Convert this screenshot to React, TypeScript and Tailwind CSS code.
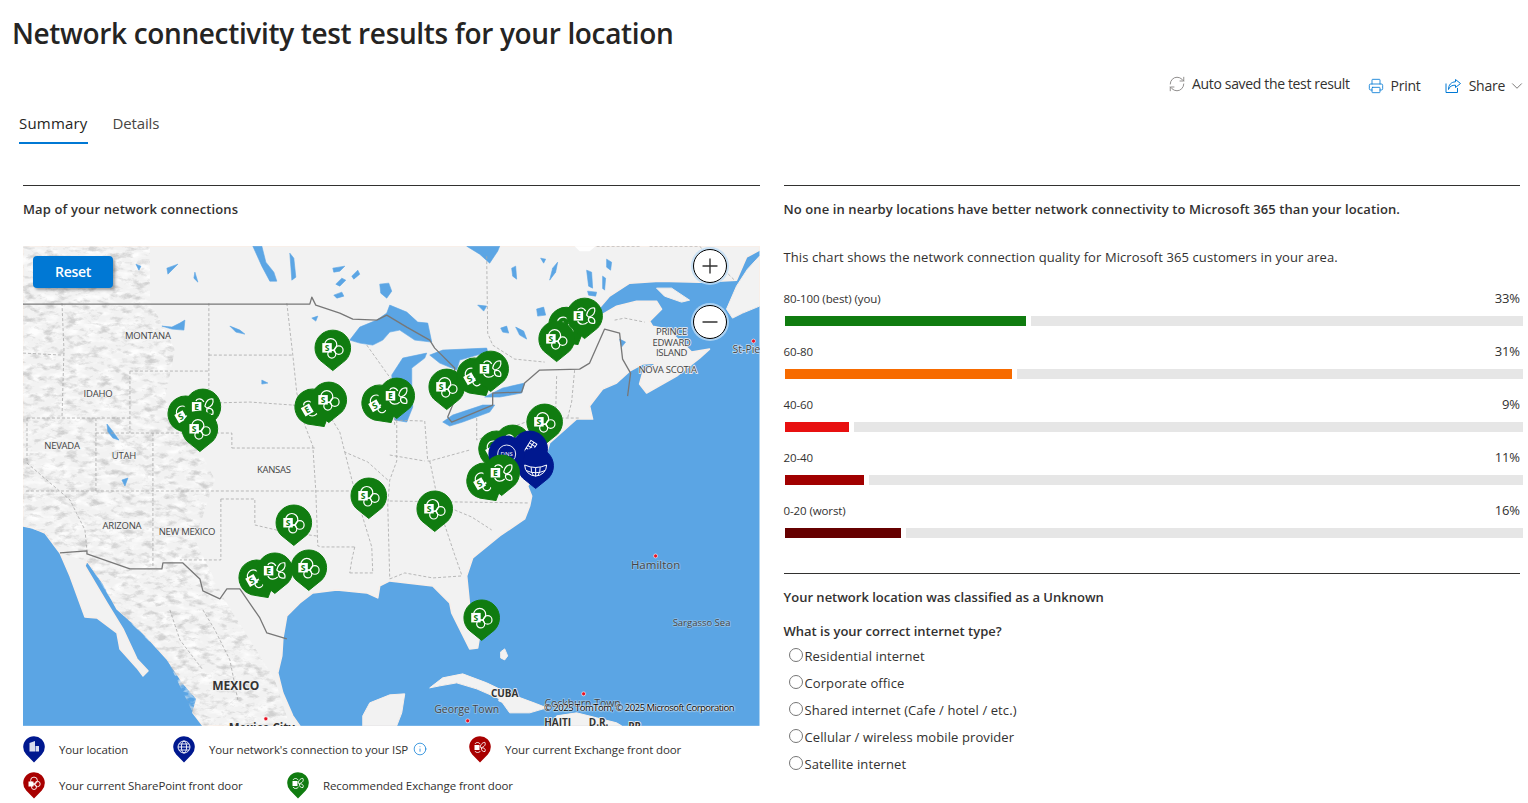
import { ChevronDown, Info, Minus, Plus, Printer, RefreshCw } from "lucide-react";

const land =
  "M23 246 L760 246 L760 250 L747 257 L737 280 L700 282 L660 281 L630 283 L610 296 L598 310 L585 325 L565 343 L556 356 L575 345 L600 316 L617 306 L637 301 L657 301 L662 309 L650 321 L653 326 L667 329 L683 343 L692 352 L710 349 L700 358 L677 376 L647 393 L640 384 L643 373 L657 363 L643 364 L630 371 L617 383 L603 389 L590 406 L593 419 L577 419 L550 443 L547 453 L538 470 L528 486 L532 496 L530 506 L525 519 L500 536 L473 558 L467 576 L470 606 L480 636 L478 648 L470 649 L460 629 L452 613 L450 603 L433 586 L407 583 L390 581 L380 586 L378 598 L367 593 L337 590 L313 593 L300 603 L287 616 L283 639 L282 656 L278 673 L283 693 L293 716 L300 726 L203 726 L193 713 L197 699 L183 683 L167 659 L148 638 L133 623 L117 609 L103 583 L87 561 L85 566 L107 603 L123 629 L137 659 L148 671 L143 676 L137 668 L120 649 L117 633 L97 618 L85 617 L70 576 L60 553 L45 533 L33 528 L23 526 Z";

const islands = [
  "M363 726 L363 716 L370 703 L390 695 L405 694 L402 713 L397 726 Z",
  "M430 688 L443 678 L463 674 L487 683 L510 694 L537 704 L547 708 L530 713 L510 713 L500 699 L477 689 L457 683 L440 686 Z",
  "M552 726 L557 716 L577 713 L597 718 L617 723 L622 726 Z",
  "M727 309 L737 286 L748 269 L760 256 L760 306 L743 313 L733 318 Z",
  "M657 288 L672 288 L690 300 L682 302 L665 296 Z",
  "M500 697 L506 700 L504 703 L499 701 Z",
  "M501 652 L505 649 L508 656 L505 660 L501 658 Z",
];

const lakes = [
  // Great Lakes
  "M350 340 L360 327 L377 320 L387 313 L390 305 L407 312 L418 322 L428 323 L432 342 L415 340 L400 330 L390 332 L383 340 L373 345 L360 343 Z",
  "M392 375 L403 358 L427 353 L425 358 L412 368 L412 383 L413 407 L407 422 L395 420 Z",
  "M430 355 L443 350 L487 348 L488 352 L460 360 L457 370 L440 363 Z",
  "M443 422 L453 415 L483 405 L495 405 L490 412 L463 422 L450 426 Z",
  "M485 397 L503 388 L525 383 L522 393 L500 397 Z",
  // Hudson and James Bay
  "M467 246 L500 246 L498 251 L490 263 L480 254 Z",
  // Canadian lakes
  "M380 284 L389 283 L392 291 L387 298 L381 293 Z",
  "M550 280 L553 268 L558 262 L556 272 Z",
  "M512 268 L516 266 L517 279 L513 276 Z",
  "M537 309 L544 307 L546 315 L538 316 Z",
  "M478 305 L487 306 L484 311 Z",
  "M501 328 L507 326 L509 333 L503 332 Z",
  "M516 327 L524 331 L527 339 L520 335 Z",
  "M587 270 L592 272 L593 288 L589 286 Z",
  "M607 259 L612 262 L611 270 L607 267 Z",
  "M603 276 L606 278 L605 290 L603 288 Z",
  "M588 291 L597 292 L596 296 L589 295 Z",
  "M541 258 L546 259 L544 263 Z",
  "M253 246 L262 246 L266 262 L274 272 L277 281 L270 281 L262 266 Z",
  "M290 253 L294 258 L296 277 L292 280 L291 266 Z",
  "M333 268 L345 266 L340 271 L334 272 Z",
  "M336 284 L342 278 L346 280 L340 286 Z",
  "M352 276 L358 270 L360 274 L354 279 Z",
  "M334 295 L342 292 L344 296 L337 298 Z",
  "M312 318 L318 316 L316 321 Z",
  // Lakes in the western states and prairies
  "M162 326 L172 327 L180 323 L185 320 L184 330 L172 329 Z",
  "M107 424 L111 429 L119 440 L113 438 L108 432 Z",
  "M136 264 L141 266 L139 270 Z",
  "M167 268 L178 264 L168 274 Z",
  "M195 272 L198 282 L194 278 Z",
  "M230 326 L240 330 L245 334 L236 332 Z",
  "M262 380 L268 383 L262 384 Z",
  "M122 480 L128 478 L125 486 Z",
  "M620 339 L626 342 L622 347 Z",
];

const stateLines = [
  "M62 303 L64 350 L62 418",
  "M209 303 L209 389",
  "M130 371 L209 371",
  "M130 371 L130 433",
  "M27 418 L130 418",
  "M96 418 L96 491",
  "M96 433 L232 433 L232 448",
  "M209 355 L293 355",
  "M209 403 L250 402 L293 405",
  "M232 448 L315 448",
  "M26 491 L315 491",
  "M153 433 L153 566",
  "M221 499 L221 560 L180 560",
  "M221 499 L255 499 L255 525 L285 532 L317 536",
  "M287 303 L293 355 L297 393 L305 425 L313 446 L316 491 L318 546 L322 547 L355 547",
  "M350 573 L373 573",
  "M355 547 L352 560 L350 573",
  "M316 491 L369 491",
  "M27 418 L27 463 L70 500 L85 530 L87 551",
  "M23 353 L62 355",
  "M293 405 L325 408 L340 432 L345 452 L368 462 L388 480",
  "M345 452 L355 491 L372 547 L373 573",
  "M397 420 L397 461 L390 480 L388 505 L390 579",
  "M430 461 L432 470 L440 510 L455 555 L462 575",
  "M390 501 L530 503",
  "M390 579 L405 573 L433 578 L462 576",
  "M390 420 L425 421 L428 461 L430 461 L470 450",
  "M390 455 L425 461",
  "M455 510 L472 517 L492 530",
  "M487 256 L488 333 L493 345 L515 359 L545 362",
  "M477 418 L477 440 L537 418 L580 418",
  "M557 376 L556 415",
  "M575 370 L572 402 L568 418",
  "M615 320 L625 318 L645 322",
  "M597 246 L640 246",
  "M650 246 L700 246 L735 280",
  "M367 345 L392 380 L395 425",
  "M203 610 L215 630 L230 660 L238 700",
  "M170 610 L180 640 L203 670",
];

const borders = [
  "M23 304 L310 304 L312 297 L316 305 L340 313 L353 319 L377 320 L387 315 L407 327 L430 340 L435 348 L455 368 L455 400 L448 417 L452 422 L493 405 L493 393 L522 392 L525 383 L540 370 L580 369 L590 363 L605 329 L620 333 L623 359 L631 373 L628 396",
  "M60 553 L87 551 L87 554 L130 569 L162 569 L163 563 L183 563 L200 579 L203 591 L220 599 L227 589 L240 589 L260 618 L267 633 L287 639",
];

const labels = [
  { t: "MONTANA", x: 148, y: 339 },
  { t: "IDAHO", x: 98, y: 397 },
  { t: "NEVADA", x: 62, y: 449 },
  { t: "UTAH", x: 124, y: 459 },
  { t: "KANSAS", x: 274, y: 473 },
  { t: "ARIZONA", x: 122, y: 529 },
  { t: "NEW MEXICO", x: 187, y: 535 },
  { t: "PRINCE", x: 672, y: 335 },
  { t: "EDWARD", x: 672, y: 346 },
  { t: "ISLAND", x: 672, y: 356 },
  { t: "NOVA SCOTIA", x: 668, y: 373 },
];

const dots = [
  [656, 556],
  [754, 341],
  [468, 721],
  [584, 694],
  [266, 719],
];

function SharePointGlyph() {
  return (
    <g>
      <g fill="none" stroke="#fff" strokeWidth="1.2">
        <circle cx="-2" cy="-3.5" r="6" />
        <circle cx="6" cy="2" r="4.3" />
        <circle cx="-1" cy="6" r="4" />
      </g>
      <rect x="-10.5" y="-5" width="9.5" height="9.5" fill="#fff" />
      <text x="-5.75" y="2.8" textAnchor="middle" fontSize="8.5" fontWeight="700" fill="#107c10">
        S
      </text>
    </g>
  );
}

function ExchangeGlyph() {
  return (
    <g>
      <g fill="none" stroke="#fff" strokeWidth="1.2">
        <path d="M-7 -6 C-6 -9 -1 -9 1 -5" />
        <path d="M2 -1 C3 -6 6 -9 10 -8 C11 -4 9 0 4 1 Z" />
        <path d="M4 2 C8 0 11 3 10 7 C6 8 3 6 4 2 Z" />
        <path d="M-7 5 C-5 9 0 9 3 6" />
      </g>
      <rect x="-11" y="-5" width="9.5" height="9.5" fill="#fff" />
      <text x="-6.25" y="2.8" textAnchor="middle" fontSize="8.5" fontWeight="700" fill="#107c10">
        E
      </text>
    </g>
  );
}

function DnsGlyph() {
  return (
    <g>
      <circle cx="0" cy="0" r="9" fill="none" stroke="#fff" strokeWidth="0.9" />
      <text x="0" y="2.3" textAnchor="middle" fontSize="6" fill="#fff">
        DNS
      </text>
    </g>
  );
}

function SatelliteGlyph() {
  return (
    <g transform="rotate(32 0 0)" fill="none" stroke="#fff" strokeWidth="1">
      <rect x="-3.5" y="-8" width="7" height="13" />
      <path d="M-3.5 -5 H3.5 M-3.5 -2 H3.5 M-3.5 1 H3.5 M0 -8 V5 M0 5 V9" />
    </g>
  );
}

function GlobeGlyph() {
  return (
    <g fill="none" stroke="#fff" strokeWidth="1">
      <path d="M-11 -1 Q0 4 11 -1 A11 11 0 0 1 -11 -1 Z" />
      <path d="M-4.5 1.2 Q-5 6 -2 10 M4.5 1.2 Q5 6 2 10 M0 1.5 V10.5 M-9.5 4.5 Q0 9 9.5 4.5" />
    </g>
  );
}

const glyphs = {
  sp: SharePointGlyph,
  ex: ExchangeGlyph,
  dns: DnsGlyph,
  sat: SatelliteGlyph,
  globe: GlobeGlyph,
};

type PinKind = keyof typeof glyphs;

const pins: { x: number; y: number; kind: PinKind; tilt?: number; blue?: boolean }[] = [
  { x: 333, y: 348, kind: "sp" },
  { x: 567, y: 325, kind: "sp", tilt: -30 },
  { x: 585, y: 316, kind: "ex" },
  { x: 557, y: 339, kind: "sp" },
  { x: 447, y: 387, kind: "sp" },
  { x: 475, y: 376, kind: "sp", tilt: -30 },
  { x: 491, y: 369, kind: "ex" },
  { x: 380, y: 403, kind: "sp", tilt: -30 },
  { x: 397, y: 396, kind: "ex" },
  { x: 313, y: 407, kind: "ex", tilt: -30 },
  { x: 329, y: 400, kind: "sp" },
  { x: 186, y: 414, kind: "sp", tilt: -30 },
  { x: 203, y: 407, kind: "ex" },
  { x: 200, y: 429, kind: "sp" },
  { x: 545, y: 422, kind: "sp" },
  { x: 497, y: 449, kind: "sp", tilt: -30 },
  { x: 513, y: 443, kind: "ex" },
  { x: 530, y: 449, kind: "sat", blue: true },
  { x: 536, y: 466, kind: "globe", blue: true },
  { x: 507, y: 454, kind: "dns", blue: true },
  { x: 485, y: 481, kind: "sp", tilt: -30 },
  { x: 502, y: 473, kind: "ex" },
  { x: 369, y: 496, kind: "sp" },
  { x: 435, y: 509, kind: "sp" },
  { x: 294, y: 523, kind: "sp" },
  { x: 257, y: 578, kind: "sp", tilt: -30 },
  { x: 275, y: 571, kind: "ex" },
  { x: 309, y: 568, kind: "sp" },
  { x: 482, y: 618, kind: "sp" },
];

function MapPin({ x, y, kind, tilt = 0, blue }: { x: number; y: number; kind: PinKind; tilt?: number; blue?: boolean }) {
  const Glyph = glyphs[kind];
  return (
    <g transform={`translate(${x} ${y}) rotate(${tilt})`}>
      <path
        d="M0 22.5 L-13 12 A17.8 17.8 0 1 1 13 12 Z"
        fill={blue ? "#00188f" : "#107c10"}
        stroke={blue ? "#00188f" : "#107c10"}
        strokeLinejoin="round"
        strokeWidth="1"
      />
      <Glyph />
    </g>
  );
}

function NetworkMap() {
  return (
    <svg viewBox="23 246 737 480" className="block h-[480px] w-full" xmlns="http://www.w3.org/2000/svg">
      <defs>
        <filter id="shade" x="0" y="0" width="100%" height="100%">
          <feTurbulence type="fractalNoise" baseFrequency="0.09 0.17" numOctaves="4" seed="7" />
          <feColorMatrix type="matrix" values="0 0 0 0 0.45  0 0 0 0 0.45  0 0 0 0 0.45  3.4 0 0 0 -1.7" />
        </filter>
        <filter id="light" x="0" y="0" width="100%" height="100%">
          <feTurbulence type="fractalNoise" baseFrequency="0.07 0.14" numOctaves="3" seed="21" />
          <feColorMatrix type="matrix" values="0 0 0 0 1  0 0 0 0 1  0 0 0 0 1  3 0 0 0 -1.3" />
        </filter>
        <clipPath id="mountains">
          <path d="M23 246 L150 246 L150 300 L175 350 L165 400 L190 430 L215 480 L195 540 L225 600 L275 680 L290 726 L203 726 L193 713 L167 659 L117 609 L87 561 L60 553 L45 533 L23 526 Z" />
        </clipPath>
      </defs>

      <rect x="23" y="246" width="737" height="480" fill="#5ba5e4" />
      <path d={land} fill="#f2f2f2" stroke="#f8efe9" strokeWidth="1.5" strokeLinejoin="round" />
      {islands.map((d) => (
        <path key={d} d={d} fill="#f2f2f2" stroke="#f8efe9" strokeWidth="1" />
      ))}
      <path d="M575 246 H596 L590 251 H580 Z" fill="#fff" />
      <g clipPath="url(#mountains)">
        <rect x="23" y="246" width="280" height="480" filter="url(#light)" opacity="0.8" />
        <rect x="23" y="246" width="280" height="480" filter="url(#shade)" opacity="0.55" />
      </g>
      {lakes.map((d) => (
        <path key={d} d={d} fill="#5ba5e4" stroke="#5ba5e4" strokeWidth="0.6" strokeLinejoin="round" />
      ))}

      <g fill="none" stroke="#a8a8a8" strokeWidth="0.8" strokeDasharray="3 2">
        {stateLines.map((d) => (
          <path key={d} d={d} />
        ))}
      </g>
      <g fill="none" stroke="#777" strokeWidth="1.3" strokeLinejoin="round">
        {borders.map((d) => (
          <path key={d} d={d} />
        ))}
      </g>

      {dots.map(([x, y]) => (
        <circle key={x} cx={x} cy={y} r="2" fill="#e81123" stroke="#fff" strokeWidth="0.6" />
      ))}

      <g fill="#444" fontSize="9.5" textAnchor="middle" stroke="#f2f2f2" strokeWidth="1.5" paintOrder="stroke">
        {labels.map((l) => (
          <text key={l.t} x={l.x} y={l.y} letterSpacing="-0.25">
            {l.t}
          </text>
        ))}
        <text x="236" y="690" fontSize="12" fontWeight="700" fill="#333">
          MEXICO
        </text>
        <text x="505" y="697" fontSize="10" fontWeight="700" fill="#333">
          CUBA
        </text>
        <text x="558" y="726" fontSize="10" fontWeight="700" fill="#333">
          HAITI
        </text>
        <text x="599" y="726" fontSize="10" fontWeight="700" fill="#333">
          D.R.
        </text>
        <text x="635" y="730" fontSize="10" fontWeight="700" fill="#333">
          PR
        </text>
        <text x="656" y="569" fontSize="11.5" stroke="#8fc0ea">
          Hamilton
        </text>
        <text x="702" y="626" fontSize="9.5" stroke="#8fc0ea">
          Sargasso Sea
        </text>
        <text x="467" y="713" fontSize="10.5" stroke="#8fc0ea">
          George Town
        </text>
        <text x="583" y="707" fontSize="10.5" stroke="#8fc0ea">
          Cockburn Town
        </text>
        <text x="733" y="353" fontSize="10.5" textAnchor="start" stroke="#c6def3">
          St-Pierre
        </text>
        <text x="262" y="732" fontSize="11.5" fontWeight="700" fill="#333">
          Mexico City
        </text>
      </g>

      {pins.map((p) => (
        <MapPin key={`${p.x}-${p.y}`} {...p} />
      ))}
    </svg>
  );
}

function ShareIcon() {
  return (
    <svg viewBox="0 0 16 16" className="h-4 w-4" fill="none" stroke="#0078d4" strokeWidth="1">
      <path d="M1 5.5 V14.5 H12.5 V10" />
      <path d="M10.5 1.5 L15.5 5.5 L10.5 9.5 V7.2 C7 7 4.5 8.5 3.5 11.5 C3.5 7 6 4 10.5 3.8 Z" strokeLinejoin="round" />
    </svg>
  );
}

function LegendPin({ color, children }: { color: string; children: React.ReactNode }) {
  return (
    <svg viewBox="0 0 22 27" className="h-[27px] w-[22px] shrink-0">
      <path d="M11 26.5 L3.2 18.5 A10.8 10.8 0 1 1 18.8 18.5 Z" fill={color} />
      {children}
    </svg>
  );
}

function LegendButterfly() {
  return (
    <g fill="none" stroke="#fff" strokeWidth="0.9">
      <path d="M11 11 C12 8 14 6 16 6.5 C17 9 15 11 12.5 11.5 Z" />
      <path d="M12.5 12 C15 11.5 17 13 16 15.5 C14 16 12 14.5 12.5 12 Z" />
      <path d="M6 8 C7 6 10 6 11 8 M6 15 C7 17 10 17 11.5 15" />
      <rect x="5.5" y="9" width="5" height="5" fill="#fff" stroke="none" />
    </g>
  );
}

function LegendClover() {
  return (
    <g fill="none" stroke="#fff" strokeWidth="0.9">
      <circle cx="11" cy="8.5" r="3.4" />
      <circle cx="14.5" cy="12" r="2.7" />
      <circle cx="11" cy="15" r="2.5" />
      <rect x="5.5" y="9.5" width="5" height="5" fill="#fff" stroke="none" />
    </g>
  );
}

function LegendItem({
  icon,
  label,
  width,
  children,
}: {
  icon: React.ReactNode;
  label: string;
  width: string;
  children?: React.ReactNode;
}) {
  return (
    <div className={`flex items-center gap-[14px] ${width}`}>
      {icon}
      <span className="whitespace-nowrap text-[11.5px] tracking-[-0.12px] text-[#323130]">{label}</span>
      {children}
    </div>
  );
}

const bars = [
  { label: "80-100 (best) (you)", pct: "33%", fill: "w-[241px] bg-[#107c10]" },
  { label: "60-80", pct: "31%", fill: "w-[227px] bg-[#f76b00]" },
  { label: "40-60", pct: "9%", fill: "w-[64px] bg-[#e81010]" },
  { label: "20-40", pct: "11%", fill: "w-[79px] bg-[#a10000]" },
  { label: "0-20 (worst)", pct: "16%", fill: "w-[116px] bg-[#660000]" },
];

const internetTypes = [
  "Residential internet",
  "Corporate office",
  "Shared internet (Cafe / hotel / etc.)",
  "Cellular / wireless mobile provider",
  "Satellite internet",
];

export default function App() {
  return (
    <div className="h-[803px] overflow-hidden bg-white font-['Open_Sans',sans-serif] text-[#323130]">
      <h1 className="pl-3 pt-[15px] text-[28px] font-semibold leading-9 tracking-[-0.35px] text-[#252423]">
        Network connectivity test results for your location
      </h1>

      <div className="mt-[25px] flex h-5 items-center justify-end pr-[2px] text-sm tracking-[-0.25px]">
        <RefreshCw className="h-[18px] w-[18px] -translate-y-0.5 text-[#8a8886]" strokeWidth={1.25} />
        <span className="ml-1.5 -translate-y-0.5 tracking-[-0.35px]">Auto saved the test result</span>
        <Printer className="ml-[18px] h-4 w-4 text-[#0078d4]" strokeWidth={1.25} />
        <span className="ml-[7px]">Print</span>
        <span className="ml-6">
          <ShareIcon />
        </span>
        <span className="ml-2">Share</span>
        <ChevronDown className="ml-[3px] h-[18px] w-[18px] text-[#605e5c]" strokeWidth={1.1} />
      </div>

      <div className="mt-[16px] flex gap-[25px] pl-[19px] text-[15px]">
        <div className="h-[32px] border-b-2 border-[#0078d4] font-medium tracking-[0.2px] text-[#252423]">Summary</div>
        <div className="tracking-[-0.15px] text-[#484644]">Details</div>
      </div>

      <div className="mt-[41px] grid grid-cols-2 gap-6 pl-[23px] pr-2">
        <section className="border-t border-[#323130]">
          <h2 className="mt-[13px] text-[13px] font-semibold leading-5 tracking-[0.13px] text-[#323130]">
            Map of your network connections
          </h2>
          <div className="relative mt-[27px] h-[480px] overflow-hidden">
            <NetworkMap />
            <button className="absolute left-2.5 top-2.5 h-8 w-20 rounded-sm bg-[#0078d4] text-sm font-semibold tracking-[-0.3px] text-white shadow-[2px_2px_3px_rgba(0,0,0,0.35)]">
              Reset
            </button>
            <div className="absolute left-[670px] top-[3px] flex h-[34px] w-[34px] items-center justify-center rounded-full border-[1.5px] border-black bg-white text-[#333] shadow-[0_0_0_2px_rgba(190,220,245,0.8)]">
              <Plus className="h-6 w-6" strokeWidth={1.4} />
            </div>
            <div className="absolute left-[670px] top-[59px] flex h-[34px] w-[34px] items-center justify-center rounded-full border-[1.5px] border-black bg-white text-[#333] shadow-[0_0_0_2px_rgba(190,220,245,0.8)]">
              <Minus className="h-6 w-6" strokeWidth={1.4} />
            </div>
            <span className="absolute left-[521px] top-[455px] whitespace-nowrap text-[9.5px] tracking-[-0.5px] text-black [text-shadow:0_0_2px_#fff,0_0_2px_#fff,0_0_2px_#fff]">
              © 2025 TomTom, © 2025 Microsoft Corporation
            </span>
          </div>
          <div className="mt-[10px] flex items-center">
            <LegendItem
              width="w-[150px]"
              label="Your location"
              icon={
                <LegendPin color="#00188f">
                  <g fill="#fff" opacity="0.85">
                    <path d="M6.5 15.5 V7 L12 5 V15.5 Z" />
                    <path d="M12.5 15.5 V10 H16 V15.5 Z" />
                  </g>
                </LegendPin>
              }
            />
            <LegendItem
              width="w-[296px]"
              label="Your network's connection to your ISP"
              icon={
                <LegendPin color="#00188f">
                  <g fill="none" stroke="#fff" strokeWidth="0.9">
                    <circle cx="11" cy="11" r="6" />
                    <ellipse cx="11" cy="11" rx="2.6" ry="6" />
                    <path d="M5 11 H17 M6 8 H16 M6 14 H16" />
                  </g>
                </LegendPin>
              }
            >
              <Info className="-ml-[9px] h-[14px] w-[14px] -translate-y-px text-[#0078d4]" strokeWidth={1.25} />
            </LegendItem>
            <LegendItem
              width="w-[240px]"
              label="Your current Exchange front door"
              icon={
                <LegendPin color="#a80000">
                  <LegendButterfly />
                </LegendPin>
              }
            />
          </div>
          <div className="mt-[9px] flex items-center">
            <LegendItem
              width="w-[264px]"
              label="Your current SharePoint front door"
              icon={
                <LegendPin color="#a80000">
                  <LegendClover />
                </LegendPin>
              }
            />
            <LegendItem
              width="w-[240px]"
              label="Recommended Exchange front door"
              icon={
                <LegendPin color="#107c10">
                  <LegendButterfly />
                </LegendPin>
              }
            />
          </div>
        </section>

        <section className="border-t border-[#323130]">
          <h2 className="mt-[13px] text-[13px] font-semibold leading-5 tracking-[0.1px] text-[#323130]">
            No one in nearby locations have better network connectivity to Microsoft 365 than your location.
          </h2>
          <p className="mt-[28px] text-[13px] leading-5 tracking-[0.09px]">
            This chart shows the network connection quality for Microsoft 365 customers in your area.
          </p>

          <div className="mt-[22px]">
            {bars.map((bar) => (
              <div key={bar.label} className="h-[53px]">
                <div className="flex h-[20px] items-center justify-between">
                  <span className="text-[11.5px] tracking-[-0.1px]">{bar.label}</span>
                  <span className="text-[13px] tracking-[-0.1px]">{bar.pct}</span>
                </div>
                <div className="ml-px mt-[7px] flex h-2.5 w-[738px] gap-[5px]">
                  <div className={bar.fill} />
                  <div className="flex-1 bg-[#e6e6e6]" />
                </div>
              </div>
            ))}
          </div>

          <div className="mt-[19px] border-t border-[#323130]">
            <h2 className="mt-[13px] text-[13px] font-semibold leading-5">Your network location was classified as a Unknown</h2>
            <h3 className="mt-[14px] text-[13px] font-semibold leading-5">What is your correct internet type?</h3>
            <div className="mt-[2px] pl-[5px]">
              {internetTypes.map((type) => (
                <label key={type} className="flex h-[27px] items-center gap-[2px] text-[13px] tracking-[0.1px]">
                  <input type="radio" name="internet-type" className="m-0 h-[14px] w-[14px] -translate-y-0.5" />
                  {type}
                </label>
              ))}
            </div>
          </div>
        </section>
      </div>
    </div>
  );
}
